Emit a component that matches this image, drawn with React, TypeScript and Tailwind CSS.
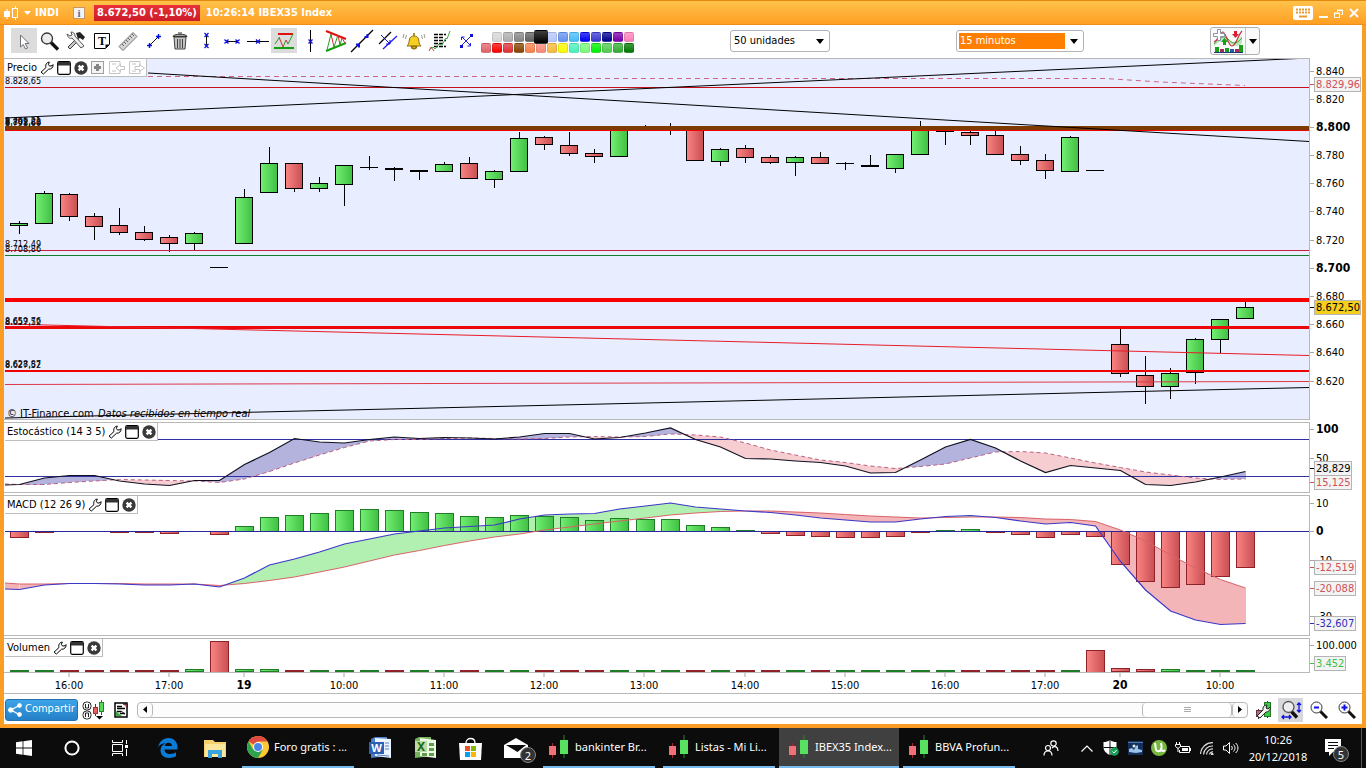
import { Fragment, type ReactNode } from "react";

const PLOT_LEFT = 4;
const PLOT_WIDTH = 1306;

/** x of the middle of bar i, in plot units */
const barX = (i: number) => Math.round(19 + 25.02 * i);

// body top and bottom, high, low and direction (green, red or doji), in plot units
type Candle = [top: number, bottom: number, high: number, low: number, kind: "g" | "r" | "d"];

const candles: Candle[] = [
  [223, 225, 221, 233, "g"],
  [193, 223, 191, 223, "g"],
  [194, 216, 193, 220, "r"],
  [216, 226, 213, 239, "r"],
  [225, 232, 208, 234, "r"],
  [232, 239, 226, 240, "r"],
  [237, 243, 235, 251, "r"],
  [233, 243, 232, 249, "g"],
  [267, 267, 267, 267, "d"],
  [197, 243, 189, 243, "g"],
  [163, 192, 147, 192, "g"],
  [163, 188, 163, 191, "r"],
  [183, 188, 177, 191, "g"],
  [165, 184, 165, 205, "g"],
  [167, 167, 156, 169, "d"],
  [168, 169, 167, 180, "r"],
  [170, 171, 170, 179, "d"],
  [164, 171, 162, 171, "g"],
  [163, 178, 157, 178, "r"],
  [171, 179, 170, 187, "g"],
  [138, 171, 132, 171, "g"],
  [137, 144, 136, 149, "r"],
  [145, 153, 132, 155, "r"],
  [153, 156, 149, 162, "r"],
  [129, 156, 129, 156, "g"],
  [129, 129, 125, 130, "d"],
  [129, 129, 123, 134, "d"],
  [129, 160, 129, 160, "r"],
  [149, 161, 148, 165, "g"],
  [148, 157, 145, 162, "r"],
  [157, 162, 155, 163, "r"],
  [157, 162, 156, 175, "g"],
  [157, 163, 152, 163, "r"],
  [163, 163, 162, 169, "d"],
  [165, 166, 155, 166, "d"],
  [154, 168, 154, 172, "g"],
  [129, 154, 121, 154, "g"],
  [131, 131, 131, 144, "d"],
  [132, 135, 131, 144, "r"],
  [135, 154, 131, 154, "r"],
  [154, 160, 146, 164, "r"],
  [160, 170, 154, 178, "r"],
  [137, 171, 136, 171, "g"],
  [170, 170, 170, 170, "d"],
  [344, 373, 328, 376, "r"],
  [375, 386, 356, 403, "r"],
  [373, 386, 368, 398, "g"],
  [339, 372, 338, 383, "g"],
  [319, 339, 319, 352, "g"],
  [307, 318, 302, 318, "g"],
];

const stochK = [
  484.5, 478, 475.5, 475.5, 481, 484, 485.5, 480.5, 480.5, 464.5, 452.5, 438.5, 442, 443, 439.5, 437,
  438.5, 437.5, 438, 439, 437, 433.5, 433.5, 439, 437.5, 433, 428, 439.5, 447, 458.5, 459, 461, 462.5,
  466, 473, 472.5, 460, 447, 439.5, 448, 461, 472.5, 465.5, 468, 470.5, 484.5, 485.5, 482, 477, 471.5,
];
const stochD = [
  484.5, 484.5, 482.5, 481, 479.5, 480, 480.5, 481, 482.5, 479, 471.5, 463, 455, 447.5, 441, 439.5,
  439.5, 438.5, 438, 438.5, 439, 438.5, 437, 436.5, 437, 436.5, 434, 435, 437, 443, 450, 455, 460,
  462.5, 466, 468.5, 466.5, 464, 458, 452, 451.5, 453, 458, 463, 467.5, 472, 475, 478, 479.5, 479,
];
const macdLine = [
  589.5, 585, 583.5, 583.5, 584, 585, 585, 584, 587, 578, 565, 559, 552, 544, 539, 534, 531, 528,
  526.5, 525, 519, 515, 514, 513.5, 509, 506, 503, 507, 509, 511, 512.5, 515, 518, 520, 522, 522, 519,
  516.5, 515.5, 517.5, 521, 524, 522.5, 526, 561.5, 590, 611, 620, 624.5, 623.5,
];
const macdSignal = [
  584, 584, 583.5, 583.5, 583.5, 584, 584, 584, 585.5, 583.5, 580.5, 577, 572, 567, 561, 555, 550.5,
  545.5, 541, 537, 534, 530, 527, 524, 521, 518, 515, 513, 511.5, 511, 511, 512, 513, 514.5, 516, 517,
  518, 517.5, 517, 517, 517.5, 519, 519.5, 521.5, 530, 541, 555, 568, 579.5, 588,
];
const histogram = [
  -6, -1, 0, 0, -1, -1, -2, 0, -3, 5, 14, 16, 18, 21, 22, 21, 19, 18, 15, 14, 16, 15, 14, 11, 13, 12,
  12, 6, 4, 1, -2, -4, -5, -6, -6, -5, -1, 1, 2, -1, -3, -6, -3, -5, -33, -50, -56, -53, -45, -36,
];
const volume = [
  1, 1, 1, 1, 1, 1, 1, 2, 31, 2, 2, 1, 1, 1, 1, 1, 1, 1, 1, 1, 1, 1, 1, 1, 1, 1, 1, 1, 1, 1, 1, 1, 1,
  1, 1, 1, 1, 1, 1, 1, 1, 1, 1, 22, 3, 2, 2, 1, 1, 1,
];

const points = (ys: number[], first: number) =>
  [`5,${first}`, ...ys.map((y, i) => `${barX(i) + 0.5},${y}`)].join(" ");

/** Areas between two series, split where they cross. */
function Between({ a, b, above, below }: { a: number[]; b: number[]; above: string; below: string }) {
  const shapes: ReactNode[] = [];
  for (let i = 0; i < a.length - 1; i++) {
    const x0 = barX(i) + 0.5;
    const x1 = barX(i + 1) + 0.5;
    const d0 = a[i] - b[i];
    const d1 = a[i + 1] - b[i + 1];
    if (d0 * d1 < 0) {
      const t = d0 / (d0 - d1);
      const xc = x0 + (x1 - x0) * t;
      const yc = a[i] + (a[i + 1] - a[i]) * t;
      shapes.push(
        <Fragment key={i}>
          <path d={`M${x0} ${a[i]}L${xc} ${yc}L${x0} ${b[i]}Z`} fill={d0 < 0 ? above : below} />
          <path d={`M${x1} ${a[i + 1]}L${xc} ${yc}L${x1} ${b[i + 1]}Z`} fill={d1 < 0 ? above : below} />
        </Fragment>,
      );
    } else {
      shapes.push(
        <path
          key={i}
          d={`M${x0} ${a[i]}L${x1} ${a[i + 1]}L${x1} ${b[i + 1]}L${x0} ${b[i]}Z`}
          fill={d0 + d1 < 0 ? above : below}
        />,
      );
    }
  }
  return <g shapeRendering="crispEdges">{shapes}</g>;
}

function Bar({ i, y, height, up }: { i: number; y: number; height: number; up: boolean }) {
  return (
    <rect
      x={barX(i) - 8.5}
      y={y + 0.5}
      width="18"
      height={height}
      fill={up ? "url(#up)" : "url(#down)"}
      stroke={up ? "#1f7d27" : "#8f2228"}
      shapeRendering="crispEdges"
    />
  );
}

/** Horizontal level across the whole plot. */
const Level = ({ y, size = 1, color }: { y: number; size?: number; color: string }) => (
  <rect x="5" y={y} width="1304" height={size} fill={color} />
);

/* ---------- panels ---------- */

const WrenchIcon = () => (
  <svg width="14" height="14" viewBox="0 0 14 14" fill="#fff" stroke="#000" strokeLinejoin="round">
    <path d="M1 11.2 6 6.5C5.3 4.4 6 1.6 9.3 1L8.4 3.4l1.2 1.7 2.6-.4.8-1.1c.3 3-1.8 4.8-4.4 4.6L3.4 13Z" />
  </svg>
);

const WindowIcon = () => (
  <svg width="14" height="14" viewBox="0 0 14 14">
    <rect x=".7" y=".7" width="12.6" height="12.6" rx="1.5" fill="#fff" stroke="#000" strokeWidth="1.2" />
    <path d="M1 4.5V2l1-1h10l1 1v2.5Z" fill="#333" />
  </svg>
);

const CloseIcon = () => (
  <svg width="14" height="14" viewBox="0 0 14 14">
    <circle cx="7" cy="7" r="6.7" fill="#3a3a3a" />
    <path d="m4.6 4.6 4.8 4.8m0-4.8L4.6 9.4" stroke="#fff" strokeWidth="2.4" />
  </svg>
);

function PanelHeader({ title, children }: { title: string; children?: ReactNode }) {
  return (
    <div className="absolute top-px left-px flex h-[18px] items-center gap-[3px] border-r border-b border-[#bdbdbd] bg-white pr-px pl-[2px]">
      <h2 className="text-[11px] leading-4 whitespace-nowrap">{title}</h2>
      <button type="button" aria-label={`Configurar ${title}`}>
        <WrenchIcon />
      </button>
      <button type="button" aria-label={`Maximizar ${title}`}>
        <WindowIcon />
      </button>
      <button type="button" aria-label={`Cerrar ${title}`}>
        <CloseIcon />
      </button>
      {children}
    </div>
  );
}

type PanelProps = {
  top: number;
  size: number;
  heightClass: string;
  plotClass: string;
  header: ReactNode;
  axis: ReactNode;
  children: ReactNode;
};

function Panel({ top, size, heightClass, plotClass, header, axis, children }: PanelProps) {
  return (
    <section className={`flex ${heightClass}`}>
      <div className={`relative min-w-0 flex-1 ${plotClass}`}>
        <svg
          className="block h-full w-full"
          viewBox={`${PLOT_LEFT} ${top} ${PLOT_WIDTH} ${size}`}
          preserveAspectRatio="none"
        >
          {children}
          <path
            d={`M4 ${top + 0.5}H1309.5V${top + size - 0.5}H4`}
            fill="none"
            stroke="#b8b8b8"
            shapeRendering="crispEdges"
          />
        </svg>
        {header}
      </div>
      <svg className="block h-full w-[52px] shrink-0" viewBox={`1310 ${top} 52 ${size}`}>
        {axis}
      </svg>
    </section>
  );
}

function Tick({ y, label, bold }: { y: number; label: string; bold?: boolean }) {
  return (
    <>
      <path d={`M1310 ${y + 0.5}h4`} stroke="#a8a8a8" />
      <text x="1316" y={y + 4} fontSize={bold ? 12 : 11} fontWeight={bold ? 700 : 400}>
        {label}
      </text>
    </>
  );
}

type TagProps = { y: number; width: number; label: string; color: string; fill?: string };

function Tag({ y, width, label, color, fill = "#f3f3f3" }: TagProps) {
  return (
    <>
      <path d={`M1310 ${y + 7.5}h4`} stroke={color} />
      <rect x="1314.5" y={y + 0.5} width={width} height="14" fill={fill} stroke="#b4b4b4" />
      <text x="1316" y={y + 11} fontSize="11" fill={color}>
        {label}
      </text>
    </>
  );
}

const priceTicks: [number, string, boolean?][] = [
  [71, "8.840"],
  [99, "8.820"],
  [127, "8.800", true],
  [155, "8.780"],
  [183, "8.760"],
  [211, "8.740"],
  [240, "8.720"],
  [268, "8.700", true],
  [296, "8.680"],
  [324, "8.660"],
  [352, "8.640"],
  [381, "8.620"],
];

const levelLabels: [number, string][] = [
  [84, "8.828,65"],
  [124, "8.799,21"],
  [125, "8.801,88"],
  [126, "8.798,60"],
  [247, "8.712,49"],
  [252, "8.708,86"],
  [324, "8.659,76"],
  [325, "8.657,52"],
  [367, "8.628,87"],
  [368, "8.627,52"],
];

function PricePanel() {
  return (
    <Panel
      top={58}
      size={362}
      heightClass="h-[362px]"
      plotClass="bg-[#e8eeff]"
      header={
        <PanelHeader title="Precio">
          <button type="button" aria-label="Añadir">
            <svg width="14" height="14" viewBox="0 0 14 14">
              <rect x=".5" y=".5" width="12" height="12" fill="#f4f4f4" stroke="#a0a0a0" />
              <path d="M6.5 3v7M3 6.5h7" stroke="#858585" strokeWidth="3" />
            </svg>
          </button>
          <button type="button" aria-label="Importar" disabled className="pl-px">
            <svg width="16" height="14" viewBox="0 0 16 14" fill="#fff" stroke="#c4c4c4">
              <path d="M11 4V.5H.5v12H11V10M3 3h4M3 10h4" />
              <path d="M15.5 5.5h-4v-2L7 7l4.500 3.500v-2h4Z" />
            </svg>
          </button>
          <button type="button" aria-label="Exportar" disabled className="pl-px">
            <svg width="16" height="14" viewBox="0 0 16 14" fill="#fff" stroke="#c4c4c4">
              <path d="M11 4V.5H.5v12H11V10M3 3h4M3 10h4" />
              <path d="M6 5.500h4.500v-2L15.500 7l-5 3.500v-2H6Z" />
            </svg>
          </button>
        </PanelHeader>
      }
      axis={
        <>
          {priceTicks.map(([y, label, bold]) => (
            <Tick key={label} y={y} label={label} bold={bold} />
          ))}
          <Tag y={77} width={46} label="8.829,96" color="#cf5058" />
          <Tag y={300} width={46} label="8.672,50" color="#000" fill="#f5cf1e" />
        </>
      }
    >
      <defs>
        <linearGradient id="up">
          <stop offset="0" stopColor="#74f074" />
          <stop offset="1" stopColor="#3fbf43" />
        </linearGradient>
        <linearGradient id="down">
          <stop offset="0" stopColor="#fa8484" />
          <stop offset="1" stopColor="#c94f52" />
        </linearGradient>
      </defs>
      <path
        d="M148 76.500H560V78.500H1105L1160 82L1245 85.500"
        fill="none"
        stroke="#cc6484"
        strokeDasharray="5 4"
      />
      <g stroke="#000" shapeRendering="crispEdges">
        {candles.map(([top, bottom, high, low, kind], i) => {
          const x = barX(i);
          return (
            <g key={i}>
              <path d={`M${x + 0.5} ${high}V${low + 1}`} />
              {kind === "d" ? (
                <rect x={x - 9} y={top} width="18" height={bottom - top + 1} fill="#000" stroke="none" />
              ) : (
                <rect
                  x={x - 8.5}
                  y={top + 0.5}
                  width="17"
                  height={bottom - top}
                  fill={kind === "g" ? "url(#up)" : "url(#down)"}
                />
              )}
            </g>
          );
        })}
      </g>
      <Level y={87} color="#c8101c" />
      <Level y={126} size={4} color="#7d3b00" />
      <Level y={130} color="#f00000" />
      <Level y={250} color="#c8203c" />
      <Level y={255} color="#107c28" />
      <Level y={298} size={4} color="#f80000" />
      <Level y={326} size={3} color="#ec0808" />
      <Level y={370} size={2} color="#f00000" />
      <g fill="none">
        <path d="M5 324 1309 355.500" stroke="#e81c28" />
        <path d="M5 384.500 1309 381.500" stroke="#e03848" />
        <path d="M5 118 1309 58M148 73 1309 141.500M5 418 1309 387.500" stroke="#000" />
      </g>
      <g fontSize="9">
        {levelLabels.map(([y, label]) => (
          <text key={label} x="5" y={y}>
            {label}
          </text>
        ))}
      </g>
      <text x="7" y="417" fontSize="11">
        © IT-Finance.com
      </text>
      <text x="98" y="417" fontSize="11" fontStyle="italic">
        Datos recibidos en tiempo real
      </text>
    </Panel>
  );
}

function StochasticPanel() {
  return (
    <Panel
      top={422}
      size={71}
      heightClass="h-[71px]"
      plotClass="bg-white"
      header={<PanelHeader title="Estocástico (14 3 5)" />}
      axis={
        <>
          <Tick y={429} label="100" bold />
          <Tick y={458} label="50" />
          <Tag y={475} width={37} label="15,125" color="#cf5058" />
          <Tag y={461} width={37} label="28,829" color="#000" />
        </>
      }
    >
      <Between a={stochK} b={stochD} above="#b3b3de" below="#f6cdd0" />
      <Level y={439} color="#3030a0" />
      <Level y={476} color="#3030a0" />
      <polyline points={points(stochD, 484)} fill="none" stroke="#bf6080" strokeDasharray="4 3" />
      <polyline points={points(stochK, 485)} fill="none" stroke="#101020" strokeWidth="1.200" />
    </Panel>
  );
}

function MacdPanel() {
  return (
    <Panel
      top={495}
      size={141}
      heightClass="h-[141px]"
      plotClass="bg-white"
      header={<PanelHeader title="MACD (12 26 9)" />}
      axis={
        <>
          <Tick y={503} label="10" />
          <Tick y={531} label="0" bold />
          <Tick y={560} label="-10" />
          <Tick y={616} label="-30" />
          <Tag y={560} width={41} label="-12,519" color="#cf5058" />
          <Tag y={581} width={41} label="-20,088" color="#cf5058" />
          <Tag y={616} width={41} label="-32,607" color="#2c2cb8" />
        </>
      }
    >
      <path d="M5 583 19.500 584V589.500L5 589Z" fill="#f2b4b6" />
      <Between a={macdLine} b={macdSignal} above="#b2f0b2" below="#f3b5b8" />
      {histogram.map((h, i) =>
        h === 0 ? null : <Bar key={i} i={i} y={h > 0 ? 531 - h : 531} height={Math.abs(h)} up={h > 0} />,
      )}
      <Level y={531} color="#28289c" />
      <polyline points={points(macdSignal, 583)} fill="none" stroke="#d9636a" />
      <polyline points={points(macdLine, 589)} fill="none" stroke="#3c38c8" strokeWidth="1.200" />
    </Panel>
  );
}

function VolumePanel() {
  return (
    <Panel
      top={638}
      size={35}
      heightClass="h-[35px]"
      plotClass="bg-white"
      header={<PanelHeader title="Volumen" />}
      axis={
        <>
          <Tick y={645} label="100.000" />
          <Tag y={656} width={31} label="3.452" color="#3fbf43" />
        </>
      }
    >
      {volume.map((v, i) => {
        const kind = candles[i][4];
        return <Bar key={i} i={i} y={v > 5 ? 672 - v : 671 - v} height={v} up={kind === "g" || (kind === "d" && v < 3)} />;
      })}
    </Panel>
  );
}

const timeTicks: [number, string, boolean?][] = [
  [69, "16:00"],
  [169, "17:00"],
  [244, "19", true],
  [344, "10:00"],
  [444, "11:00"],
  [544, "12:00"],
  [644, "13:00"],
  [745, "14:00"],
  [845, "15:00"],
  [945, "16:00"],
  [1045, "17:00"],
  [1120, "20", true],
  [1220, "10:00"],
];

function TimeAxis() {
  return (
    <div className="flex h-[20px]">
      <svg className="block h-full min-w-0 flex-1" aria-label="Horas">
        {timeTicks.map(([x, label, bold]) => {
          const at = `${((x - PLOT_LEFT) / PLOT_WIDTH) * 100}%`;
          return (
            <Fragment key={x}>
              <line x1={at} x2={at} y1="0" y2="4" stroke="#a8a8a8" />
              <text x={at} y="16" textAnchor="middle" fontSize={bold ? 12 : 11} fontWeight={bold ? 700 : 400}>
                {label}
              </text>
            </Fragment>
          );
        })}
      </svg>
      <div className="w-[52px]" />
    </div>
  );
}

/* ---------- title bar and toolbar ---------- */

function TitleBar() {
  return (
    <header className="flex h-[25px] items-center border-t border-b border-t-[#e08a10] border-b-[#ee8c1c] bg-linear-to-b from-[#ffc24a] to-[#ff9f22] pt-px pl-[4px] text-[11px] font-bold text-white">
      <svg width="16" height="16" viewBox="0 0 16 16" fill="#fff" stroke="#fff">
        <rect x=".5" y="6.500" width="5" height="5" />
        <path d="M3 4v10M11.500 1v14" />
        <rect x="8.500" y="3.500" width="5" height="9" fill="#ffb038" />
      </svg>
      <button type="button" aria-label="Menú" className="ml-[4px]">
        <svg width="7" height="4" viewBox="0 0 7 4">
          <path d="M0 0h7L3.500 4Z" fill="#fff" />
        </svg>
      </button>
      <span className="ml-[4px] w-[38px]">INDI</span>
      <button
        type="button"
        aria-label="Información"
        className="flex h-[12px] w-[12px] items-center justify-center border border-[#c89860] bg-[#f4f4f4] font-['Liberation_Serif',serif] leading-none text-[#4870a0]"
      >
        i
      </button>
      <span className="ml-[9px] bg-linear-to-b from-[#e83038] to-[#cc1c28] px-[3px] leading-4 whitespace-nowrap">
        8.672,50 (-1,10%)
      </span>
      <h1 className="ml-[6px] whitespace-nowrap">10:26:14 IBEX35 Index</h1>
      <div className="mr-[7px] ml-auto flex items-center gap-[6px]">
        <button type="button" aria-label="Teclado">
          <svg width="20" height="14" viewBox="0 0 20 14">
            <rect width="20" height="14" rx="2" fill="#fff" />
            <path d="M3 3.500h14M3 6.500h14" stroke="#e89a30" strokeWidth="2" strokeDasharray="2 1" />
            <path d="M6 10.500h8" stroke="#e89a30" strokeWidth="2" />
          </svg>
        </button>
        <button type="button" aria-label="Minimizar">
          <svg width="9" height="10" viewBox="0 0 9 10">
            <path d="M0 9h9" stroke="#fff" strokeWidth="2" />
          </svg>
        </button>
        <button type="button" aria-label="Restaurar">
          <svg width="9" height="9" viewBox="0 0 9 9" fill="none" stroke="#fff">
            <path d="M3.500 3V1.500h5v4H7M3 1h6" />
            <path d="M.5 4.500h5v4h-5ZM0 4h6" />
          </svg>
        </button>
        <button type="button" aria-label="Cerrar">
          <svg width="10" height="10" viewBox="0 0 10 10">
            <path d="m1 1 8 8m0-8L1 9" stroke="#fff" strokeWidth="2" />
          </svg>
        </button>
      </div>
    </header>
  );
}

const cross = (x: number, y: number) => `M${x - 2} ${y - 2}l4 4m0 -4l-4 4`;

const tools: { name: string; selected?: boolean; icon: ReactNode }[] = [
  {
    name: "Cursor",
    selected: true,
    icon: <path d="M8.500 6v12l2.700-2.500 2.300 4.500 2-1-2.300-4.500h3.800Z" fill="#fff" stroke="#707078" strokeLinejoin="round" />,
  },
  {
    name: "Lupa",
    icon: (
      <>
        <path d="m13 13.500 7 7" stroke="#111" strokeWidth="3.400" />
        <circle cx="9" cy="9.500" r="5.500" fill="#ececec" stroke="#333" strokeWidth="1.300" />
      </>
    ),
  },
  {
    name: "Herramientas",
    icon: (
      <>
        <path d="m4 18 9-9 2 2-9 9Z" fill="#c8c8c8" stroke="#444" />
        <path d="m12 4 4-1 5 5-2 3-3-2-2 1Z" fill="#222" />
        <path d="M3 5c1 4 3 5 5 4l9 10 3-2-9-10c0-3-2-4-4-4l1 3-2 1Z" fill="#eee" stroke="#555" />
      </>
    ),
  },
  {
    name: "Texto",
    icon: (
      <>
        <path d="M4.500 4.500h15v11l-4 4h-11Z" fill="#fff" stroke="#000" />
        <path d="M15.500 19.500v-4h4Z" fill="#000" />
        <text x="12" y="16" textAnchor="middle" fontSize="12" fontWeight="700" fontFamily="Liberation Serif, serif" fill="#000">
          T
        </text>
      </>
    ),
  },
  {
    name: "Regla",
    icon: (
      <>
        <path d="m3 17.500 14-14 4 4-14 14Z" fill="#d4d4d4" stroke="#777" />
        <path d="m6 15 2 2m0-4 2 2m0-4 2 2m0-4 2 2m0-4 2 2m0-4 2 2" stroke="#666" />
      </>
    ),
  },
  {
    name: "Segmento",
    icon: (
      <>
        <path d="m8 16 8-8" stroke="#111" />
        <path d="M7.500 14v5M5 16.500h5M16.500 5v5M14 7.500h5" stroke="#0010e0" strokeWidth="1.400" />
      </>
    ),
  },
  {
    name: "Borrar",
    icon: (
      <>
        <path d="m6 8 1 12h10l1-12Z" fill="#c4c4c4" stroke="#444" />
        <path d="M9.500 10v9M12 10v9M14.500 10v9" stroke="#444" />
        <path d="M5 7.500c0-3 14-3 14 0ZM10 4h4" fill="#aaa" stroke="#333" />
      </>
    ),
  },
  {
    name: "Segmento vertical",
    icon: (
      <>
        <path d="M12.500 7v10" stroke="#111" />
        <path d={cross(12.5, 6) + cross(12.5, 17)} stroke="#1010e8" strokeWidth="1.300" />
      </>
    ),
  },
  {
    name: "Segmento horizontal",
    icon: (
      <>
        <path d="M6 12.500h12" stroke="#111" />
        <path d={cross(6.5, 12.5) + cross(17.5, 12.5)} stroke="#1010e8" strokeWidth="1.300" />
      </>
    ),
  },
  {
    name: "Línea horizontal",
    icon: (
      <>
        <path d="M1 12.500h22" stroke="#000" />
        <path d={cross(12, 12.5)} stroke="#1010e8" strokeWidth="1.300" />
      </>
    ),
  },
  {
    name: "Soportes y resistencias",
    selected: true,
    icon: (
      <>
        <path d="M6 5h15" stroke="#e01010" strokeWidth="2" />
        <path d="M2 19h20" stroke="#10a010" strokeWidth="2" />
        <path d="m3 15 4-6" stroke="#20a020" />
        <path d="m7 8 4 10" stroke="#d03030" />
        <path d="m11 18 3-7" stroke="#20a020" />
        <path d="m14 11 2 4" stroke="#d03030" />
        <path d="m16 15 5-10" stroke="#20a020" />
      </>
    ),
  },
  {
    name: "Línea vertical",
    icon: (
      <>
        <path d="M12.500 1v22" stroke="#000" />
        <path d={cross(12.5, 12.5)} stroke="#1010e8" strokeWidth="1.300" />
      </>
    ),
  },
  {
    name: "Figuras",
    icon: (
      <>
        <path d="m2 2 20 8" stroke="#e01010" strokeWidth="2" />
        <path d="m2 22 20-8" stroke="#10a010" strokeWidth="2" />
        <path d="m3 21 4-16M10 18l4-12M16 16l2-7" stroke="#20a020" />
        <path d="m7 5 3 13M14 6l2 10M18 9l3 5" stroke="#d03030" />
      </>
    ),
  },
  {
    name: "Recta",
    icon: (
      <>
        <path d="M1 23 23 1" stroke="#000" strokeWidth="1.300" />
        <path d="M6 15.500h3v3M14.500 8h3V5" fill="none" stroke="#1010e8" strokeWidth="2" />
      </>
    ),
  },
  {
    name: "Canal",
    icon: (
      <>
        <path d="M3 15 15 3" stroke="#000" strokeWidth="1.200" />
        <path d="M7 20 21 7" stroke="#2020f0" strokeWidth="1.300" />
        <path d="m5 6 9 9M10 15h4v-4" fill="none" stroke="#1010d0" />
      </>
    ),
  },
  {
    name: "Alarma",
    icon: (
      <>
        <path d="M5 17c2-2 2-4 2.500-7 1-4 8-4 9 0 .5 3 .5 5 2.500 7Z" fill="#f4cf24" stroke="#907010" />
        <path d="M12 4v3M9.500 17.500c0 3 5 3 5 0Z" fill="#f4cf24" stroke="#907010" strokeWidth="1.500" />
        <path d="M4.500 6 3.500 10M19.500 6l1 4M2 5l-1 4M22 5l1 4" stroke="#999" />
      </>
    ),
  },
  {
    name: "Noticias",
    icon: (
      <>
        <path
          d="M6 5.500h12M6 8.500h10M6 11.500h12M6 14.500h9M6 17.500h12"
          stroke="#000"
          strokeDasharray="4 1"
          strokeWidth="1.500"
        />
        <path d="m2 20 3-2 2 2 4-5 3 1 4-7 1 1 3-8" fill="none" stroke="#38a848" />
        <path d="m1 22 2-4 3 4" fill="none" stroke="#b84848" />
      </>
    ),
  },
  {
    name: "Mover",
    icon: (
      <>
        <path d="M7 17 17 7M8 8l9 9" stroke="#2020d8" />
        <path d="M6 16h3v3H6ZM16 5h3v3h-3Z" fill="#1010d8" />
        <path d="M7.500 11V8h3M13.500 17h3v-3" fill="none" stroke="#2020d8" />
      </>
    ),
  },
];

const paletteTop = [
  { name: "Gris claro", color: "bg-[#d6d6d6]" },
  { name: "Gris", color: "bg-[#adadad]" },
  { name: "Gris medio", color: "bg-[#868686]" },
  { name: "Gris oscuro", color: "bg-[#606060]" },
  { name: "Negro", color: "bg-black" },
  { name: "Lavanda", color: "bg-[#b4c6fa]" },
  { name: "Azul claro", color: "bg-[#6492f2]" },
  { name: "Celeste", color: "bg-[#46bcfa]" },
  { name: "Azul", color: "bg-[#0000f4]" },
  { name: "Añil", color: "bg-[#3838d0]" },
  { name: "Azul marino", color: "bg-[#000090]" },
  { name: "Violeta", color: "bg-[#7a00ac]" },
  { name: "Rosa", color: "bg-[#fa80ba]" },
];
const paletteBottom = [
  { name: "Rojo suave", color: "bg-[#de6468]" },
  { name: "Rojo", color: "bg-[#fa0000]" },
  { name: "Carmesí", color: "bg-[#de3034]" },
  { name: "Marrón", color: "bg-[#864200]" },
  { name: "Naranja", color: "bg-[#fa8046]" },
  { name: "Salmón", color: "bg-[#fa8878]" },
  { name: "Ámbar", color: "bg-[#fab83a]" },
  { name: "Amarillo", color: "bg-[#fafa00]" },
  { name: "Turquesa", color: "bg-[#48f0bc]" },
  { name: "Verde menta", color: "bg-[#78fa78]" },
  { name: "Lima", color: "bg-[#00f000]" },
  { name: "Verde claro", color: "bg-[#4ccc4c]" },
  { name: "Verde", color: "bg-[#30ac30]" },
  { name: "Verde oscuro", color: "bg-[#007800]" },
];

function Swatch({ name, color }: { name: string; color: string }) {
  const big = name === "Negro";
  return (
    <span className="flex h-[11px] w-[11px] items-center justify-center">
      <button
        type="button"
        aria-label={name}
        className={`shrink-0 rounded-[2px] border border-black/10 bg-linear-to-b from-white/25 to-transparent ${big ? "z-10 h-[14px] w-[14px]" : "h-[10px] w-[10px]"} ${color}`}
      />
    </span>
  );
}

type DropdownProps = { label: string; value: string; widthClass: string; fieldClass: string };

function Dropdown({ label, value, widthClass, fieldClass }: DropdownProps) {
  return (
    <div className={`flex h-[22px] items-center rounded-[3px] border border-[#b4b4b4] bg-white p-[2px] ${widthClass}`}>
      <select
        aria-label={label}
        defaultValue={value}
        className={`h-[16px] min-w-0 flex-1 appearance-none p-0 pl-px text-[11px] leading-4 outline-none ${fieldClass}`}
      >
        <option>{value}</option>
      </select>
      <svg className="mr-[3px] ml-[5px] shrink-0" width="8" height="5" viewBox="0 0 8 5">
        <path d="M0 0h8L4 5Z" />
      </svg>
    </div>
  );
}

function Toolbar() {
  return (
    <div className="flex h-[33px] items-start bg-white pt-[2px] pl-[7px]">
      <div className="flex shrink-0 pt-px">
        {tools.map((tool) => (
          <button
            key={tool.name}
            type="button"
            aria-label={tool.name}
            aria-pressed={tool.selected ?? false}
            className={`flex h-[25px] w-[26px] items-center justify-center ${tool.selected ? "bg-[#dcdcdc]" : ""}`}
          >
            <svg width="24" height="24" viewBox="0 0 24 24" fill="none">
              {tool.icon}
            </svg>
          </button>
        ))}
      </div>
      <div className="ml-px flex shrink-0 flex-col items-end pt-[4px]">
        <div className="flex">
          {paletteTop.map((s) => (
            <Swatch key={s.name} {...s} />
          ))}
        </div>
        <div className="flex">
          {paletteBottom.map((s) => (
            <Swatch key={s.name} {...s} />
          ))}
        </div>
      </div>
      <div className="ml-[96px] flex gap-[126px] pt-[3px]">
        <Dropdown label="Unidades" value="50 unidades" widthClass="w-[100px]" fieldClass="bg-white" />
        <Dropdown label="Periodo" value="15 minutos" widthClass="w-[128px]" fieldClass="bg-[#ff7f00] text-white" />
      </div>
      <div className="mr-[102px] ml-auto flex h-[28px] shrink-0 rounded-[3px] border border-[#b0b0b0] bg-[#fafafa]">
        <button type="button" aria-label="Añadir indicador" className="flex w-[34px] items-center justify-center">
          <svg width="30" height="24" viewBox="0 0 30 24" fill="none">
            <path d="M1 15C6 8 11 6 15 10s7 5 14-4v8c-4 5-9 3-14-1-5-3-8-1-14 4Z" fill="#b8e8b8" />
            <path d="M1 15C6 8 11 6 15 10s7 7 14-1" stroke="#38a838" />
            <path d="M1 13c4-1 6-10 9-10s5 14 9 14c4 0 6-11 10-15" stroke="#c83048" strokeWidth="1.200" />
            <path d="M4.500.5h3v4h4v3h-4v4h-3v-4h-4v-3h4Z" fill="#fff" stroke="#8494a8" />
            <path d="M10 16v-3H8l3.500-4 3.500 4h-2v3Z" fill="#18a018" />
            <path d="M21 2v3h-2l3.500 4L26 5h-2V2Z" fill="#d82030" />
            <path d="M2 18h4v5H2ZM12 19h4v4h-4ZM26 16h4v7h-4Z" fill="#18a018" />
            <path d="M7 20h4v3H7ZM22 20h4v3h-4Z" fill="#a82858" />
            <path d="M17 20h4v3h-4Z" fill="#2858b0" />
            <path d="M1 23.500h29" stroke="#203878" />
          </svg>
        </button>
        <button
          type="button"
          aria-label="Más indicadores"
          className="flex w-[14px] items-center justify-center border-l border-[#c4c4c4]"
        >
          <svg width="8" height="5" viewBox="0 0 8 5">
            <path d="M0 0h8L4 5Z" />
          </svg>
        </button>
      </div>
    </div>
  );
}

/* ---------- bottom toolbar ---------- */

function BottomBar() {
  return (
    <div className="flex h-[31px] items-center border-t border-[#b8b8b8] bg-white pt-px pr-[6px] pl-px">
      <button
        type="button"
        className="flex h-[22px] w-[73px] shrink-0 items-center gap-[3px] rounded-[3px] border border-[#2570b0] bg-linear-to-b from-[#3ca4e8] to-[#2580c8] pl-[2px] text-[11px] text-white"
      >
        <svg className="shrink-0" width="14" height="14" viewBox="0 0 14 14" fill="#fff" stroke="#fff">
          <path d="M12 2 3 7l9 5" fill="none" strokeWidth="1.400" />
          <circle cx="11.500" cy="2.500" r="1.900" />
          <circle cx="2.700" cy="7" r="2.200" />
          <circle cx="11.500" cy="11.500" r="1.900" />
        </svg>
        Compartir
      </button>
      <button type="button" aria-label="Vincular" className="ml-[4px] shrink-0">
        <svg width="24" height="22" viewBox="0 0 24 22" fill="none">
          <rect x="1" y="3" width="8" height="8" rx="3.500" stroke="#222" />
          <rect x="1" y="12" width="8" height="8" rx="3.500" stroke="#222" />
          <path d="M3.500 5v4h3V5M3.500 18v-4h3v4" stroke="#222" />
          <path d="M13.500 5v12" stroke="#802020" />
          <rect x="11.500" y="8.500" width="4" height="6" fill="#e86060" stroke="#a03030" />
          <path d="M19.500 1v15" stroke="#207020" />
          <rect x="17.500" y="3.500" width="4" height="9" fill="#58d858" stroke="#288028" />
          <path d="M14 17h7l-3.500 3.500Z" fill="#000" />
        </svg>
      </button>
      <button type="button" aria-label="Informe" className="ml-[8px] shrink-0">
        <svg width="15" height="16" viewBox="0 0 15 16">
          <rect x="1" y="1" width="12" height="14" fill="#fff" stroke="#000" strokeWidth="1.500" />
          <path d="M3 4.500h5M3 6.500h8M3 9.500h4M6 11.500h5" stroke="#000" strokeWidth="1.300" />
          <path d="M9 2h4v4M7 9l4 3" fill="#d86878" stroke="#111" />
          <path d="M2 14v-5l6 5Z" fill="#40a840" />
        </svg>
      </button>
      <div className="ml-[8px] flex h-[16px] min-w-0 flex-1 items-stretch rounded-[4px] border border-[#b8b8b8] bg-[#fcfcfc]">
        <button
          type="button"
          aria-label="Desplazar a la izquierda"
          className="flex w-[15px] items-center justify-center rounded-[4px] border-r border-[#b8b8b8]"
        >
          <svg width="4" height="7" viewBox="0 0 4 7">
            <path d="M4 0v7L0 3.500Z" />
          </svg>
        </button>
        <div className="ml-auto flex w-[90px] items-center justify-center rounded-[4px] border-x border-[#b8b8b8] bg-white">
          <svg width="7" height="5" viewBox="0 0 7 5">
            <path d="M0 .5h7M0 2.500h7M0 4.500h7" stroke="#aaa" />
          </svg>
        </div>
        <button
          type="button"
          aria-label="Desplazar a la derecha"
          className="flex w-[15px] items-center justify-center rounded-[4px] border-l border-[#b8b8b8]"
        >
          <svg width="4" height="7" viewBox="0 0 4 7">
            <path d="M0 0v7l4-3.500Z" />
          </svg>
        </button>
      </div>
      <button type="button" aria-label="Configurar gráfico" className="ml-[7px] shrink-0">
        <svg width="17" height="20" viewBox="0 0 17 20">
          <path d="M12.500 1v17M3.500 9v10" stroke="#333" />
          <rect x="9.500" y="2.500" width="6" height="14" fill="#40c848" stroke="#207828" />
          <rect x="1.500" y="10.500" width="5" height="6" fill="#b07078" stroke="#603840" />
          <path d="m2 16 6-6c-.5-3 1-5 4-5l-1 3 2 1 2-2c1 3-2 5-4 5l-6 6Z" fill="#f4f4f4" stroke="#222" />
        </svg>
      </button>
      <button
        type="button"
        aria-label="Zoom automático"
        aria-pressed="true"
        className="ml-[6px] flex h-[24px] w-[25px] shrink-0 items-center justify-center bg-[#d8d8dc]"
      >
        <svg width="22" height="20" viewBox="0 0 22 20" fill="none">
          <path d="m11 11 6 6.500" stroke="#111" strokeWidth="3.400" />
          <circle cx="8.500" cy="7" r="5.500" fill="#ededed" stroke="#555" strokeWidth="1.300" />
          <path
            d="M19 3v9M17 5l2-2 2 2M17 10l2 2 2-2M2 17h9M4 15l-2 2 2 2M9 15l2 2-2 2"
            stroke="#1010e0"
            strokeWidth="1.300"
          />
        </svg>
      </button>
      <button type="button" aria-label="Alejar" className="ml-[7px] shrink-0">
        <svg width="18" height="18" viewBox="0 0 18 18">
          <path d="m10 10 7 7" stroke="#111" strokeWidth="3" />
          <circle cx="6.500" cy="6.500" r="5.500" fill="#fafafa" stroke="#333" />
          <path d="M4 6.500h5" stroke="#1010e0" strokeWidth="2" />
        </svg>
      </button>
      <button type="button" aria-label="Acercar" className="ml-[10px] shrink-0">
        <svg width="18" height="18" viewBox="0 0 18 18">
          <path d="m10 10 7 7" stroke="#111" strokeWidth="3" />
          <circle cx="6.500" cy="6.500" r="5.500" fill="#fafafa" stroke="#333" />
          <path d="M3.500 6.500h6M6.500 3.500v6" stroke="#1010e0" strokeWidth="2" />
        </svg>
      </button>
    </div>
  );
}

/* ---------- Windows taskbar ---------- */

const CandleApp = () => (
  <svg width="22" height="24" viewBox="0 0 22 24">
    <path d="M4.500 8v15" stroke="#a02830" />
    <rect x="1" y="11" width="7" height="9" fill="#f07078" />
    <path d="M16 0v23" stroke="#208828" />
    <rect x="12" y="5" width="8" height="14" fill="#58e060" />
  </svg>
);

const ChromeIcon = () => (
  <svg width="22" height="22" viewBox="0 0 22 22">
    <circle cx="11" cy="11" r="11" fill="#fcc934" />
    <path d="M11 11 1.500 5.500A11 11 0 0 1 20.500 5.500H11Z" fill="#e04a3f" />
    <path d="M1.500 5.500A11 11 0 0 0 11 22l4.800-8.300L6.200 13.500Z" fill="#2da351" />
    <circle cx="11" cy="11" r="5" fill="#fff" />
    <circle cx="11" cy="11" r="4" fill="#4a86e8" />
  </svg>
);

function TaskButton({ label, icon, active }: { label: string; icon: ReactNode; active?: boolean }) {
  return (
    <button type="button" className={`flex h-full w-[120px] shrink-0 flex-col ${active ? "bg-[#404040]" : "px-[4px]"}`}>
      <span
        className={`flex w-full flex-1 items-center gap-[5px] whitespace-nowrap ${active ? "pl-[9px]" : "pl-[5px]"}`}
      >
        {icon}
        {label}
      </span>
      <span className="h-[2px] w-full bg-[#76b9ed]" />
    </button>
  );
}

function LaunchButton({ name, widthClass, children }: { name: string; widthClass: string; children: ReactNode }) {
  return (
    <button type="button" aria-label={name} className={`flex h-full shrink-0 items-center justify-center ${widthClass}`}>
      {children}
    </button>
  );
}

function Taskbar() {
  return (
    <footer className="flex h-[40px] items-center bg-[#0c0c0c] font-['Noto_Sans','Open_Sans',sans-serif] text-[11px] text-white">
      <LaunchButton name="Inicio" widthClass="w-[48px]">
        <svg width="16" height="16" viewBox="0 0 16 16" fill="#fff">
          <path d="m0 2.200 6.600-.9v6.300H0ZM7.400 1.200 16 0v7.600H7.400ZM0 8.400h6.600v6.300L0 13.800ZM7.400 8.400H16V16l-8.600-1.200Z" />
        </svg>
      </LaunchButton>
      <LaunchButton name="Cortana" widthClass="w-[48px]">
        <svg width="16" height="16" viewBox="0 0 16 16" fill="none" stroke="#fff" strokeWidth="2">
          <circle cx="8" cy="8" r="6.600" />
        </svg>
      </LaunchButton>
      <LaunchButton name="Vista de tareas" widthClass="w-[48px]">
        <svg width="17" height="16" viewBox="0 0 17 16" fill="none" stroke="#fff">
          <path d="M.5 0v2.500h10V0M.5 16v-2.500h10V16M.5 4.500h10v7H.5ZM14.500 0v4M14.500 9v7" />
          <path d="M13 5h3v3h-3Z" fill="#fff" stroke="none" />
        </svg>
      </LaunchButton>
      <LaunchButton name="Edge" widthClass="w-[48px]">
        <svg width="20" height="20" viewBox="0 0 20 20">
          <path
            d="M0 9C1.500 3.500 5 0 10.500 0 16 0 19.500 4 19.500 9v2.500H6.500c0 3 2.500 4.500 5.500 4.500 2.500 0 4.500-.7 6-1.700v4C16 19.500 13.700 20 11 20 6 20 2.500 17 2.500 12.500 2.500 9 4.500 6.500 7.500 5.300 4.500 5.300 1.500 6.800 0 9Zm6.700-1H14C14 6 12.800 4.700 10.500 4.700 8.300 4.700 7 6 6.700 8Z"
            fill="#0a7bd6"
          />
        </svg>
      </LaunchButton>
      <LaunchButton name="Explorador de archivos" widthClass="w-[46px]">
        <svg width="22" height="19" viewBox="0 0 22 19">
          <path d="M0 1h9l2 2h11v15H0Z" fill="#f5d06c" />
          <path d="M1 5h20v13H1Z" fill="#fce59c" />
          <path d="M4 19v-8h14v8h-4v-4H8v4Z" fill="#38a4de" />
        </svg>
      </LaunchButton>
      <TaskButton label="Foro gratis : ..." icon={<ChromeIcon />} />
      <LaunchButton name="Word" widthClass="w-[45px]">
        <svg width="23" height="22" viewBox="0 0 23 22">
          <path d="M2 2 6 0h12v19L2 21Z" fill="#4f80cc" />
          <path d="m6 1 16 1v19l-16-2Z" fill="#eef4ff" />
          <path d="M0 5h15v12H0Z" fill="#2c5eb2" />
          <text x="7.500" y="15" textAnchor="middle" fontSize="11" fontWeight="700" fill="#fff">
            W
          </text>
          <path d="M16 6h4M16 9h4M16 12h4M8 18l12 1" stroke="#4f80cc" />
        </svg>
      </LaunchButton>
      <LaunchButton name="Excel" widthClass="w-[45px]">
        <svg width="23" height="22" viewBox="0 0 23 22">
          <path d="M1 2 5 0h12v19L1 21Z" fill="#74b25a" />
          <path d="m6 1 16 2v18l-16-2Z" fill="#ecf7e6" />
          <path d="M15 6h5v3h-5ZM15 11h5v3h-5ZM8 16h5v3H8ZM15 16h5v3h-5Z" fill="#5d9e48" />
          <path d="M1 4h12v11H1Z" fill="#b9dba4" />
          <text x="7" y="14" textAnchor="middle" fontSize="12" fontWeight="700" fill="#236a20">
            X
          </text>
        </svg>
      </LaunchButton>
      <LaunchButton name="Microsoft Store" widthClass="w-[45px]">
        <svg width="23" height="23" viewBox="0 0 23 23">
          <path d="M7 6C7 0 16 0 16 6" fill="none" stroke="#fff" strokeWidth="1.300" />
          <path d="M0 6h23l-1 17H1Z" fill="#fff" />
          <path d="M6 9h5v5H6Z" fill="#f25022" />
          <path d="M12 9h5v5h-5Z" fill="#7fba00" />
          <path d="M6 15h5v5H6Z" fill="#00a4ef" />
          <path d="M12 15h5v5h-5Z" fill="#ffb900" />
        </svg>
      </LaunchButton>
      <LaunchButton name="Correo, 2 mensajes" widthClass="w-[46px]">
        <span className="relative">
          <svg width="24" height="20" viewBox="0 0 24 20">
            <path d="m0 7 12-7 12 7v13H0Z" fill="#fff" />
            <path d="m2 7 20 0-8.500 7Z" fill="#0c0c0c" />
          </svg>
          <span className="absolute top-[9px] left-[16px] flex h-[16px] w-[16px] items-center justify-center rounded-full border border-[#888] bg-[#333] text-[11px] leading-none">
            2
          </span>
        </span>
      </LaunchButton>
      <TaskButton label="bankinter Br..." icon={<CandleApp />} />
      <TaskButton label="Listas - Mi Li..." icon={<CandleApp />} />
      <TaskButton label="IBEX35 Index..." icon={<CandleApp />} active />
      <TaskButton label="BBVA Profun..." icon={<CandleApp />} />
      <div className="ml-auto flex h-full shrink-0 items-center">
        <LaunchButton name="Contactos" widthClass="w-[48px]">
          <svg width="16" height="16" viewBox="0 0 16 16" fill="none" stroke="#fff" strokeWidth="1.200">
            <circle cx="10.500" cy="3.500" r="2.700" />
            <circle cx="5" cy="8" r="2.500" />
            <path d="M1 15.500c0-6 8-6 8 0M9 8c3-3 6-1 6 3" />
          </svg>
        </LaunchButton>
        <LaunchButton name="Mostrar iconos ocultos" widthClass="w-[24px]">
          <svg width="12" height="7" viewBox="0 0 12 7">
            <path d="m.5 6.500 5.500-5.500 5.500 5.500" fill="none" stroke="#fff" strokeWidth="1.200" />
          </svg>
        </LaunchButton>
        <LaunchButton name="Seguridad" widthClass="w-[24px]">
          <svg width="16" height="16" viewBox="0 0 16 16">
            <path d="M7 0c2 1.500 4 2 6.500 2v5c0 4-3 6.500-6.500 8C3.500 13.500.5 11 .5 7V2C3 2 5 1.500 7 0Z" fill="#fff" />
            <path d="M7 0v15M.5 7.500h13" stroke="#0c0c0c" />
            <circle cx="11.500" cy="11.500" r="4.300" fill="#18a058" />
            <path d="m9.500 11.500 1.500 1.500 2.700-3" fill="none" stroke="#fff" />
          </svg>
        </LaunchButton>
        <LaunchButton name="Equipo" widthClass="w-[24px]">
          <svg width="15" height="14" viewBox="0 0 15 14">
            <rect width="15" height="14" fill="#16305c" />
            <path d="M0 1.500h15" stroke="#4878b0" />
            <path d="M1 11V8l3-1 2 2 2-4 2-1v4l4 1v2l-6 1Z" fill="#9cc4e8" />
            <circle cx="6" cy="5" r="1.500" fill="#dfeefa" />
          </svg>
        </LaunchButton>
        <LaunchButton name="uTorrent" widthClass="w-[24px]">
          <svg width="16" height="16" viewBox="0 0 16 16">
            <circle cx="8" cy="8" r="8" fill="#76b83f" />
            <path
              d="M4 3c1 5 0 9 4 8M8 11c3 0 3-4 2-8M10 8c0 3 2 4 4 2"
              fill="none"
              stroke="#fff"
              strokeWidth="2"
            />
          </svg>
        </LaunchButton>
        <LaunchButton name="Batería" widthClass="w-[24px]">
          <svg width="16" height="12" viewBox="0 0 16 12" fill="none" stroke="#fff">
            <path d="M5 4.500h9.500v6h-10V8M15.500 6v3M1.500 0v2M4.500 0v2M.5 2.500h5v2l-2.500 2-2.500-2ZM3 6v4" />
            <path d="M7 6h6v3H7Z" fill="#fff" stroke="none" />
          </svg>
        </LaunchButton>
        <LaunchButton name="Red inalámbrica" widthClass="w-[24px]">
          <svg width="14" height="13" viewBox="0 0 14 13" fill="none" stroke="#ddd">
            <path
              d="M.5 12A12 12 0 0 1 13 .700M3.500 12.500A9 9 0 0 1 13 4M6.500 12.500A6 6 0 0 1 13 7M9.500 12.500a3 3 0 0 1 3.500-2.500"
              strokeWidth="1.200"
            />
            <path d="M11.500 11.500h1.500v1.500h-1.500Z" fill="#fff" />
          </svg>
        </LaunchButton>
        <LaunchButton name="Volumen del sistema" widthClass="w-[24px]">
          <svg width="17" height="14" viewBox="0 0 17 14" fill="none" stroke="#fff">
            <path d="M.5 5v4H3l3.500 3.500v-11L3 5ZM8.500 5c1 1.500 1 2.500 0 4M10.500 3.500c2 2.500 2 4.500 0 7M12.700 2c3 3 3 7 0 10" />
          </svg>
        </LaunchButton>
        <button type="button" className="w-[70px] pb-px text-center leading-[17px]">
          <span className="block">10:26</span>
          <span className="block">20/12/2018</span>
        </button>
        <LaunchButton name="Centro de actividades" widthClass="w-[48px]">
          <span className="relative h-[18px] w-[24px]">
            <svg width="17" height="17" viewBox="0 0 17 17">
              <path d="M0 0h16v13h-8l-4 4v-4H0Z" fill="#fff" />
              <path d="M3 3.500h10M3 6.500h10M3 9.500h6" stroke="#0c0c0c" />
            </svg>
            <span className="absolute top-[7px] left-[8px] flex h-[16px] w-[16px] items-center justify-center rounded-full border border-[#888] bg-[#333] text-[11px] leading-none">
              5
            </span>
          </span>
        </LaunchButton>
        <div className="h-full w-[5px] border-l border-[#555]" />
      </div>
    </footer>
  );
}

export default function App() {
  return (
    <div className="flex min-h-screen flex-col bg-[#0c0c0c] font-['DejaVu_Sans_Condensed','DejaVu_Sans',sans-serif] text-black">
      <main className="flex flex-1 flex-col bg-[#ffa022]">
        <TitleBar />
        <div className="flex flex-1 flex-col border-x-4 border-b-4 border-[#fb9c24] bg-white">
          <Toolbar />
          <div className="flex flex-1 flex-col gap-[2px]">
            <PricePanel />
            <StochasticPanel />
            <MacdPanel />
            <VolumePanel />
          </div>
          <TimeAxis />
          <BottomBar />
        </div>
      </main>
      <Taskbar />
    </div>
  );
}
